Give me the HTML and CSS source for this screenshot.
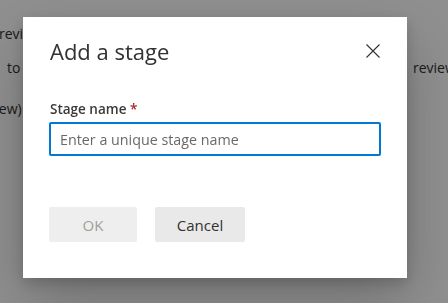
FILE: index.html
```html
<!DOCTYPE html>
<html lang="en">
<head>
  <meta charset="UTF-8" />
  <meta name="viewport" content="width=device-width, initial-scale=1.0" />
  <title>Add a stage</title>
  <link rel="stylesheet" href="styles.css">
</head>
<body>
  <!-- Page behind the dialog -->
  <div class="page">
    <p class="page-line first">review the stages of this release pipeline</p>
    <div class="page-line split">
      <span>to add a new stage</span>
      <span>review</span>
    </div>
    <p class="page-line third">(preview)</p>
  </div>

  <!-- Dialog overlay -->
  <div class="overlay">
    <div class="dialog" role="dialog" aria-labelledby="dialogTitle">
      <div class="dialog-header">
        <h1 id="dialogTitle">Add a stage</h1>
        <button class="close-button" aria-label="Close">
          <svg width="14" height="14" viewBox="0 0 14 14">
            <path d="M0.5 0.5 L13.5 13.5 M13.5 0.5 L0.5 13.5" stroke="#323130" stroke-width="1.1" fill="none" />
          </svg>
        </button>
      </div>

      <form class="dialog-body">
        <label for="stageName" class="field-label">Stage name <span class="required">*</span></label>
        <input type="text" id="stageName" class="field-input" placeholder="Enter a unique stage name">

        <div class="dialog-footer">
          <button type="submit" class="btn" disabled>OK</button>
          <button type="button" class="btn">Cancel</button>
        </div>
      </form>
    </div>
  </div>
</body>
</html>
```

FILE: styles.css
```css
/* Base styling */
body {
  font-family: "Open Sans", "Noto Sans", Arial, sans-serif;
  background-color: #fff;
  color: #323130;
  margin: 0;
  padding: 0;
  width: 448px;
  height: 303px;
  overflow: hidden;
}
/* Page content behind the overlay */
.page {
  padding-top: 24px;
  font-size: 14px;
}
.page-line {
  margin: 0;
  height: 20px;
  white-space: nowrap;
}
.first {
  margin-left: -1px;
}
.split {
  display: grid;
  grid-template-columns: 406px auto;
  margin-top: 14px;
  padding-left: 7px;
}
.third {
  margin-top: 21px;
  text-indent: -38px;
}
/* Overlay and dialog */
.overlay {
  position: fixed;
  top: 0;
  left: 0;
  width: 100%;
  height: 100%;
  background: rgba(0, 0, 0, 0.44);
  display: flex;
  align-items: flex-start;
  padding: 17px 0 0 23px;
  box-sizing: border-box;
}
.dialog {
  width: 384px;
  height: 261px;
  background: #fff;
  box-shadow: 0 25px 58px rgba(0, 0, 0, 0.22), 0 5px 14px rgba(0, 0, 0, 0.18);
  padding: 0 26px 0 26px;
  box-sizing: border-box;
}
.dialog-header {
  display: flex;
  justify-content: space-between;
  align-items: center;
  padding-top: 19px;
}
.dialog-header h1 {
  margin: 0;
  font-size: 22px;
  font-weight: 400;
  line-height: 30px;
  color: #323130;
  padding-left: 1px;
}
.close-button {
  border: none;
  background: none;
  padding: 0;
  width: 14px;
  height: 14px;
  margin-right: 1px;
  display: flex;
  cursor: pointer;
}
.dialog-body {
  display: flex;
  flex-direction: column;
  padding-top: 33px;
}
.field-label {
  font-size: 13.5px;
  font-weight: 600;
  line-height: 20px;
  padding-left: 1px;
  color: #3b3a39;
}
.required {
  color: #a4262c;
}
.field-input {
  margin-top: 3px;
  height: 34px;
  width: 332px;
  box-sizing: border-box;
  border: 2px solid #0078d4;
  border-radius: 2px;
  padding: 0 9px;
  font-family: inherit;
  font-size: 14.3px;
  color: #323130;
  outline: none;
}
.field-input::placeholder {
  color: #6b6967;
}
.dialog-footer {
  display: flex;
  gap: 18px;
  margin-top: 51px;
}
.btn {
  height: 35px;
  min-width: 88px;
  padding: 0 16px;
  border: none;
  border-radius: 2px;
  background-color: #e9e9e9;
  font-family: inherit;
  font-size: 15px;
  font-weight: 400;
  color: #323130;
  cursor: pointer;
}
.btn:first-child {
  width: 88px;
}
.btn:last-child {
  width: 90px;
}
.btn:disabled {
  background-color: #eeeeee;
  color: #a19f9d;
  cursor: default;
}
```
